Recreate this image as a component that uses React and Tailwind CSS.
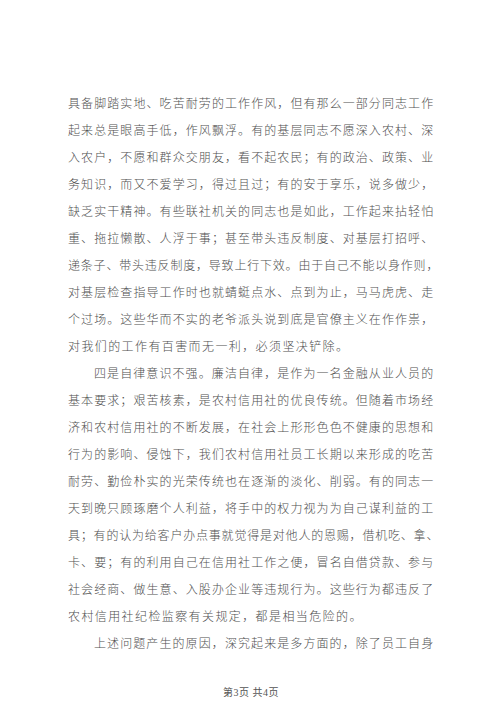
const lines = [
  { t: '具备脚踏实地、吃苦耐劳的工作作风，但有那么一部分同志工作' },
  { t: '起来总是眼高手低，作风飘浮。有的基层同志不愿深入农村、深' },
  { t: '入农户，不愿和群众交朋友，看不起农民；有的政治、政策、业' },
  { t: '务知识，而又不爱学习，得过且过；有的安于享乐，说多做少，' },
  { t: '缺乏实干精神。有些联社机关的同志也是如此，工作起来拈轻怕' },
  { t: '重、拖拉懒散、人浮于事；甚至带头违反制度、对基层打招呼、' },
  { t: '递条子、带头违反制度，导致上行下效。由于自己不能以身作则，' },
  { t: '对基层检查指导工作时也就蜻蜓点水、点到为止，马马虎虎、走' },
  { t: '个过场。这些华而不实的老爷派头说到底是官僚主义在作作祟，' },
  { t: '对我们的工作有百害而无一利，必须坚决铲除。', end: true },
  { t: '四是自律意识不强。廉洁自律，是作为一名金融从业人员的', indent: true },
  { t: '基本要求；艰苦核素，是农村信用社的优良传统。但随着市场经' },
  { t: '济和农村信用社的不断发展，在社会上形形色色不健康的思想和' },
  { t: '行为的影响、侵蚀下，我们农村信用社员工长期以来形成的吃苦' },
  { t: '耐劳、勤俭朴实的光荣传统也在逐渐的淡化、削弱。有的同志一' },
  { t: '天到晚只顾琢磨个人利益，将手中的权力视为为自己谋利益的工' },
  { t: '具；有的认为给客户办点事就觉得是对他人的恩赐，借机吃、拿、' },
  { t: '卡、要；有的利用自己在信用社工作之便，冒名自借贷款、参与' },
  { t: '社会经商、做生意、入股办企业等违规行为。这些行为都违反了' },
  { t: '农村信用社纪检监察有关规定，都是相当危险的。', end: true },
  { t: '上述问题产生的原因，深究起来是多方面的，除了员工自身', indent: true },
];

export default function App() {
  return (
    <div className="w-[500px] h-[707px] bg-white flex flex-col pl-[68px] pt-[89px] font-['Noto_Sans_CJK_SC',sans-serif] text-[#505050]">
      <div className="w-[366px] flex flex-col">
        {lines.map((line, i) => (
          <div
            key={i}
            className={
              'h-[27px] leading-[27px] text-[12px] font-light whitespace-nowrap ' +
              (line.indent ? 'pl-[26px] ' : '') +
              (line.end ? 'tracking-[1.4px] text-left' : 'tracking-[0.8px] text-justify [text-align-last:justify]')
            }
          >
            {line.t}
          </div>
        ))}
      </div>
      <div className="w-[366px] mt-[30px] text-center text-[10px] leading-[14px] tracking-[0.5px] text-[#555] font-['Liberation_Serif','Noto_Sans_CJK_SC',serif]">
        第3页 共4页
      </div>
    </div>
  );
}
